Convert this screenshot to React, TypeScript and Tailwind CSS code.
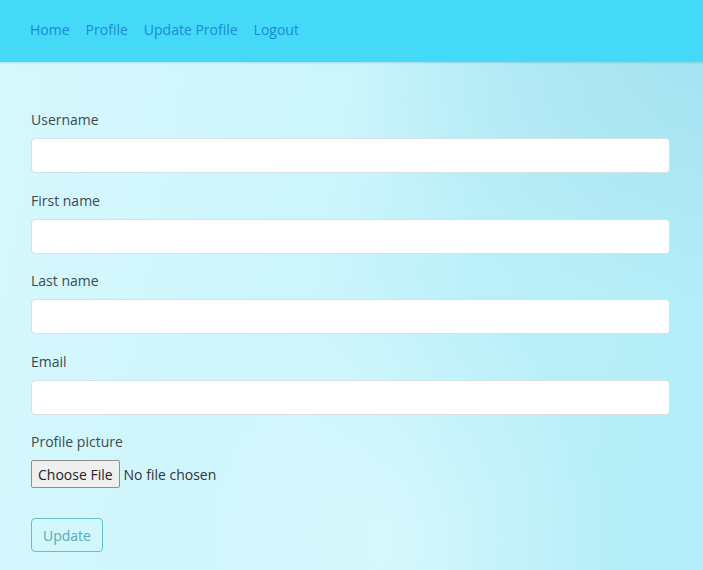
import React from "react";

const fields = ["Username", "First name", "Last name", "Email"];

export default function App() {
  return (
    <div
      className="w-[703px] h-[570px] overflow-hidden text-[14px] text-[#3b4a50]"
      style={{ fontFamily: '"Open Sans", "Noto Sans", sans-serif' }}
    >
      <nav className="h-[62px] bg-[#44d9f7] flex items-center gap-[16px] px-[30px] pb-[4px] text-[#1b8ad3] shadow-[0_1px_2px_rgba(0,120,160,0.2)] relative z-10">
        <a>Home</a>
        <a>Profile</a>
        <a>Update Profile</a>
        <a>Logout</a>
      </nav>
      <main className="h-[508px] relative bg-[linear-gradient(100deg,#d6f8fd_0%,#ccf5fc_45%,#bbf0f9_65%,#b3edf8_100%)]">
        <div className="absolute inset-0 bg-[radial-gradient(ellipse_at_100%_0%,rgba(155,218,235,0.6),transparent_35%),radial-gradient(ellipse_at_55%_95%,rgba(230,252,255,0.6),transparent_40%)]" />
        <form className="relative px-[31px] pt-[46px] flex flex-col" style={{ width: 701 }}>
          {fields.map((f) => (
            <div key={f} className="flex flex-col mb-[15.5px]">
              <label className="leading-[24px] mb-[6px]">{f}</label>
              <input className="h-[35px] bg-white border border-[#d5e0e3] rounded-[4px] px-3 outline-none" />
            </div>
          ))}
          <div className="flex flex-col">
            <label className="leading-[24px] mb-[6px]">Profile picture</label>
            <input
              type="file"
              className="text-[14px] text-[#333] file:mr-[4px] file:h-[28px] file:bg-[#efefef] file:border file:border-solid file:border-[#8f8f8f] file:rounded-[2px] file:px-[6px] file:text-[14px] file:text-[#222]"
            />
          </div>
          <div className="mt-[30px]">
            <button
              type="button"
              className="h-[34px] px-[11px] rounded-[4px] border border-[#63c0c4] text-[#55acb3] bg-transparent"
            >
              Update
            </button>
          </div>
        </form>
      </main>
    </div>
  );
}
